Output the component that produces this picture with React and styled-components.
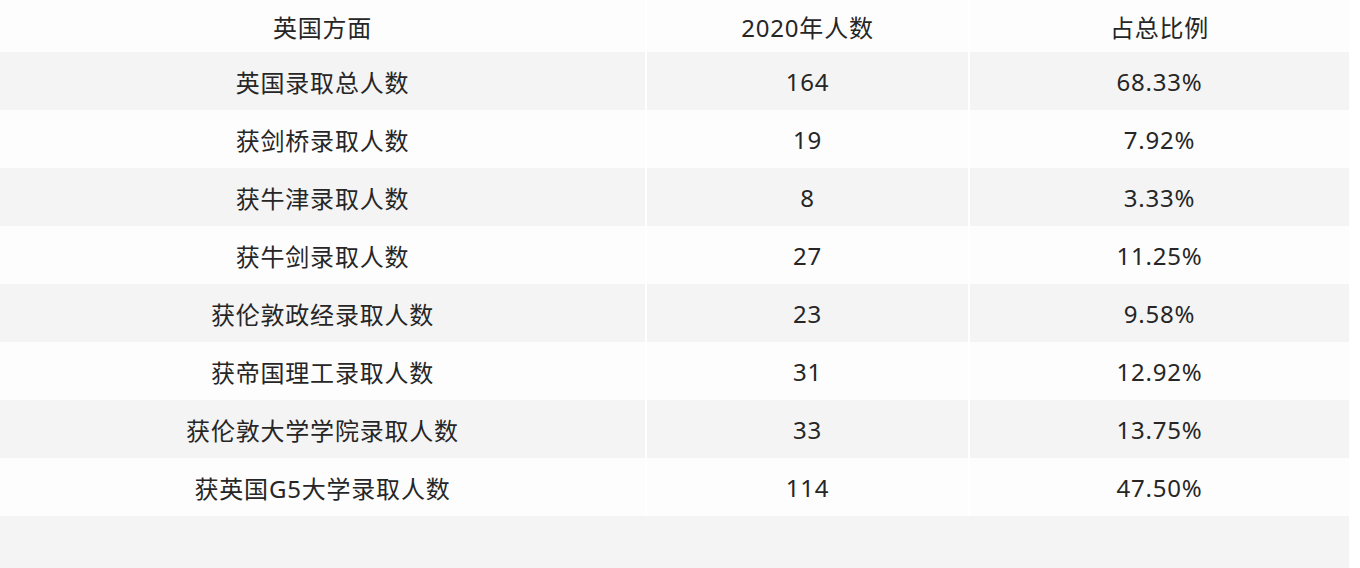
import React from "react";
import styled, { createGlobalStyle } from "styled-components";

const GlobalStyle = createGlobalStyle`
  body {
    margin: 0;
    background: #ffffff;
    font-family: "Noto Sans", "Noto Sans CJK SC", sans-serif;
  }
`;

const Table = styled.div`
  width: 1349px;
  display: flex;
  flex-direction: column;
`;

const Row = styled.div`
  display: grid;
  grid-template-columns: 645px 321px 379px;
  column-gap: 2px;
  height: ${(p) => (p.$header ? "52px" : "58px")};
`;

const Cell = styled.div`
  display: flex;
  align-items: center;
  justify-content: center;
  background: ${(p) => (p.$shade ? "#f4f4f5" : "#fdfdfe")};
  color: #262626;
  font-size: 24px;
  font-weight: 400;
  letter-spacing: 0.8px;
  white-space: nowrap;
`;

const EmptyBand = styled.div`
  height: 58px;
  background: #f4f4f5;
`;

const rows = [
  ["英国录取总人数", "164", "68.33%"],
  ["获剑桥录取人数", "19", "7.92%"],
  ["获牛津录取人数", "8", "3.33%"],
  ["获牛剑录取人数", "27", "11.25%"],
  ["获伦敦政经录取人数", "23", "9.58%"],
  ["获帝国理工录取人数", "31", "12.92%"],
  ["获伦敦大学学院录取人数", "33", "13.75%"],
  ["获英国G5大学录取人数", "114", "47.50%"],
];

export default function App() {
  return (
    <>
      <GlobalStyle />
      <Table>
        <Row $header>
          <Cell>英国方面</Cell>
          <Cell>2020年人数</Cell>
          <Cell>占总比例</Cell>
        </Row>
        {rows.map((r, idx) => (
          <Row key={idx}>
            {r.map((v, j) => (
              <Cell key={j} $shade={idx % 2 === 0}>
                {v}
              </Cell>
            ))}
          </Row>
        ))}
        <EmptyBand />
      </Table>
    </>
  );
}
